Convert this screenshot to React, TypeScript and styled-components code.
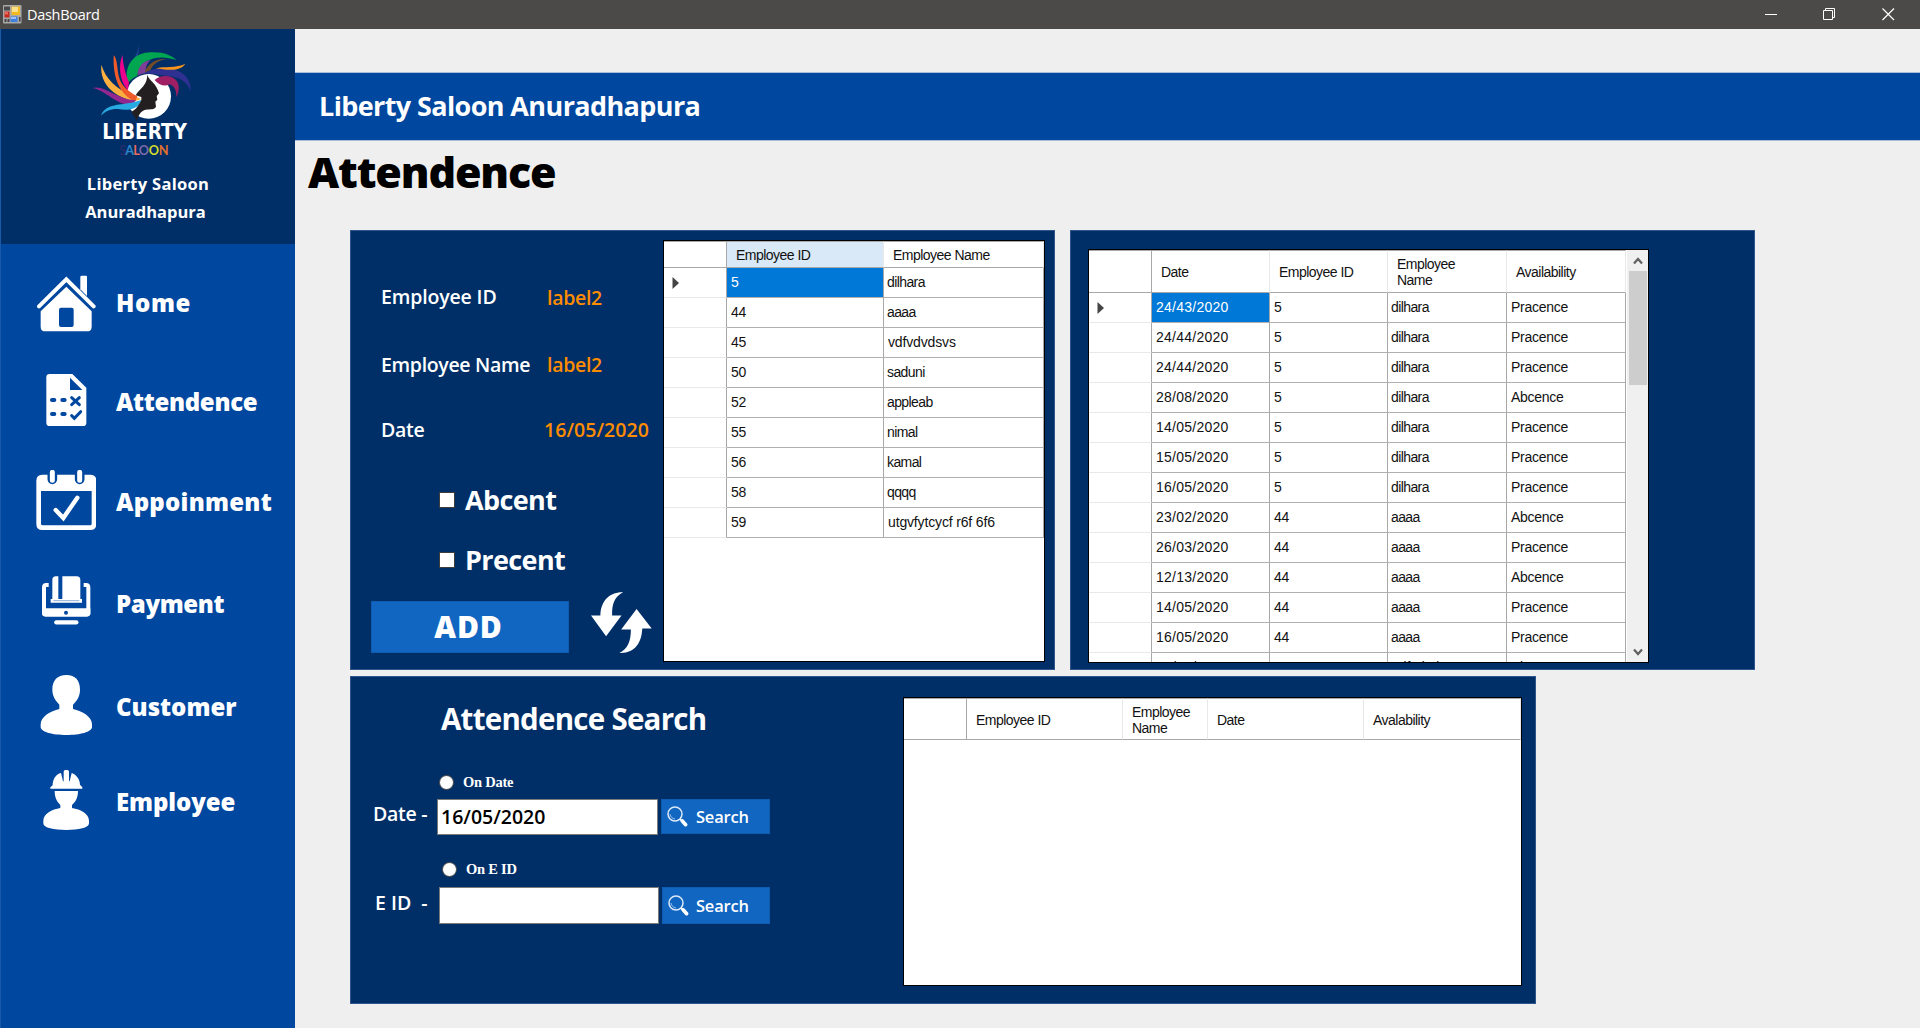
import React from "react";
import styled, { createGlobalStyle } from "styled-components";

const SANS = `"Open Sans", "Noto Sans", sans-serif`;
const GRID = `"Liberation Sans", Arial, sans-serif`;
const NAVY = "#002f68";
const BLUE = "#0047a0";
const ACTION = "#1166c1";

const GlobalStyle = createGlobalStyle`
  * { box-sizing: border-box; }
  body { margin: 0; background: #efefef; font-family: ${SANS}; overflow: hidden; }
  button { border: 0; padding: 0; font: inherit; color: inherit; }
`;

const Window = styled.div`
  display: flex;
  flex-direction: column;
  width: 1920px;
  height: 1028px;
  overflow: hidden;
`;

const TitleBar = styled.header`
  display: flex;
  align-items: center;
  height: 29px;
  flex: none;
  padding-left: 3px;
  padding-right: 25px;
  background: #4c4a48;
  color: #fff;
`;

const WindowTitle = styled.span`
  margin-left: 5px;
  flex: 1;
  font-size: 14.5px;
  line-height: 20px;
  letter-spacing: -0.3px;
`;

const WindowControls = styled.div`
  display: flex;
  gap: 46px;
  margin-top: -1px;
`;

const Body = styled.div`
  display: flex;
  flex: 1;
  min-height: 0;
`;

const Sidebar = styled.aside`
  width: 295px;
  flex: none;
  background: ${BLUE};
  border-left: 1px solid #1a58a8;
`;

const Brand = styled.div`
  display: flex;
  flex-direction: column;
  align-items: center;
  height: 215px;
  padding-top: 14px;
  background: ${NAVY};
`;

const BrandName = styled.div<{ $shift: number; $track: number; $gap: number }>`
  height: 24px;
  margin-top: ${(p) => p.$gap}px;
  margin-left: ${(p) => p.$shift}px;
  font-size: 16.5px;
  font-weight: 700;
  line-height: 24px;
  letter-spacing: ${(p) => p.$track}px;
  white-space: nowrap;
  color: #fff;
`;

const NavItem = styled.a<{ $gap: number }>`
  display: flex;
  align-items: center;
  height: 60px;
  margin-top: ${(p) => p.$gap}px;
  padding-left: 35px;
  color: #fff;
`;

const NavText = styled.span<{ $track: number; $drop: number }>`
  margin: ${(p) => p.$drop}px 0 0 20px;
  font-size: 24px;
  font-weight: 800;
  line-height: 32px;
  letter-spacing: ${(p) => p.$track}px;
`;

const Main = styled.main`
  flex: 1;
  min-width: 0;
  padding-top: 43px;
`;

const Banner = styled.div`
  height: 69px;
  padding: 14px 0 0 24px;
  background: ${BLUE};
  border-top: 1px solid #a9bcd9;
  border-bottom: 1px solid #a9bcd9;
  color: #fff;
  font-size: 27px;
  font-weight: 700;
  line-height: 38px;
  letter-spacing: -0.61px;
`;

const PageTitle = styled.h1`
  margin: 0;
  height: 89px;
  padding: 2px 0 0 13px;
  font-size: 43px;
  font-weight: 800;
  line-height: 58px;
  letter-spacing: -1.15px;
  color: #000;
`;

const PanelRow = styled.div`
  display: flex;
  gap: 15px;
  padding-left: 55px;
  margin-bottom: 6px;
`;

const Panel = styled.section<{ $w: number; $h: number }>`
  display: flex;
  align-items: flex-start;
  width: ${(p) => p.$w}px;
  height: ${(p) => p.$h}px;
  background: ${NAVY};
  border: 1px solid #2e568a;
`;

const EntryForm = styled.div`
  width: 312px;
  flex: none;
  padding-top: 51px;
  color: #fff;
`;

const Field = styled.div<{ $gap: number }>`
  display: flex;
  height: 30px;
  margin-top: ${(p) => p.$gap}px;
  padding-left: 30px;
  font-size: 19.5px;
  font-weight: 600;
  line-height: 30px;
`;

const FieldLabel = styled.span<{ $w: number; $track?: number; $drop?: number }>`
  width: ${(p) => p.$w}px;
  flex: none;
  padding-top: ${(p) => p.$drop ?? 0}px;
  letter-spacing: ${(p) => p.$track ?? -0.28}px;
  white-space: pre;
`;

const FieldValue = styled.span<{ $drop?: number; $track?: number }>`
  color: #ff8c00;
  padding-top: ${(p) => p.$drop ?? 0}px;
  letter-spacing: ${(p) => p.$track ?? -0.3}px;
`;

const CheckRow = styled.label<{ $gap: number }>`
  display: flex;
  align-items: center;
  gap: 11px;
  height: 36px;
  margin-top: ${(p) => p.$gap}px;
  padding-left: 88px;
  font-size: 27px;
  font-weight: 700;
  line-height: 36px;
  letter-spacing: -0.62px;
`;

const CheckBox = styled.span`
  width: 16px;
  height: 16px;
  margin-top: -1px;
  margin-right: -1px;
  background: #fff;
  border: 1px solid #3d3d3d;
`;

const Actions = styled.div`
  display: flex;
  align-items: flex-end;
  gap: 22px;
  height: 61px;
  margin-top: 14px;
  padding-left: 20px;
`;

const AddButton = styled.button`
  width: 198px;
  height: 52px;
  background: ${ACTION};
  border: 1px solid #0d5cb2;
  font-size: 30px;
  font-weight: 800;
  line-height: 50px;
  letter-spacing: 0.9px;
  padding: 0 3px 0 0;
`;

const DataGrid = styled.div<{ $w: number; $h: number; $x: number; $y: number }>`
  display: flex;
  width: ${(p) => p.$w}px;
  height: ${(p) => p.$h}px;
  margin: ${(p) => p.$y}px 0 0 ${(p) => p.$x}px;
  flex: none;
  overflow: hidden;
  background: #fff;
  border: 1px solid #000;
  color: #111;
  font-family: ${GRID};
  font-size: 14px;
`;

const GridRows = styled.div`
  flex: 1;
  min-width: 0;
`;

const Line = styled.div<{ $cols: string; $h: number }>`
  display: grid;
  grid-template-columns: ${(p) => p.$cols};
  height: ${(p) => p.$h}px;
`;

const HeadCell = styled.div<{ $active?: boolean; $edge?: boolean }>`
  display: flex;
  align-items: center;
  padding: 1px 0 0 9px;
  line-height: 16px;
  letter-spacing: -0.52px;
  background: ${(p) => (p.$active ? "#d9e9f7" : "#fff")};
  border-top: 1px solid #a8a8a8;
  border-right: 1px solid ${(p) => (p.$edge ? "#a8a8a8" : "#e8e8e8")};
  border-bottom: 1px solid #a8a8a8;
`;

const RowHead = styled.div`
  display: flex;
  align-items: center;
  padding-left: 8px;
  border-right: 1px solid #a8a8a8;
  border-bottom: 1px solid #e9e9e9;
`;

const Cell = styled.div<{ $selected?: boolean; $track: number }>`
  padding-left: ${(p) => (p.$track === -0.6 ? 3 : 4)}px;
  line-height: 29px;
  letter-spacing: ${(p) => p.$track}px;
  white-space: nowrap;
  color: ${(p) => (p.$selected ? "#fff" : "#111")};
  background: ${(p) => (p.$selected ? "#0078d7" : "#fff")};
  border-right: 1px solid #a8a8a8;
  border-bottom: 1px solid #b0b0b0;
`;

const ScrollTrack = styled.div`
  display: flex;
  flex-direction: column;
  align-items: center;
  width: 21px;
  background: #f0f0f0;
`;

const ScrollArrow = styled.div`
  display: flex;
  align-items: center;
  justify-content: center;
  height: 21px;
  flex: none;
`;

const ScrollThumb = styled.div`
  width: 18px;
  height: 114px;
  background: #cdcdcd;
`;

const ScrollSpace = styled.div`
  flex: 1;
`;

const SearchForm = styled.div`
  width: 552px;
  flex: none;
  padding-top: 22px;
  color: #fff;
`;

const SearchTitle = styled.h2`
  margin: 0;
  height: 40px;
  padding-left: 90px;
  font-size: 29.5px;
  font-weight: 700;
  line-height: 39px;
  letter-spacing: -0.74px;
`;

const RadioRow = styled.label<{ $gap: number; $x: number }>`
  display: flex;
  align-items: center;
  gap: 9px;
  height: 20px;
  margin-top: ${(p) => p.$gap}px;
  padding-left: ${(p) => p.$x}px;
  font-family: "Liberation Serif", "Times New Roman", serif;
  font-size: 14.5px;
  font-weight: 700;
  line-height: 20px;
  letter-spacing: -0.25px;
`;

const Radio = styled.span`
  width: 15px;
  height: 15px;
  border-radius: 50%;
  background: #fff;
  border: 1px solid #444;
`;

const SearchRow = styled.div<{ $gap: number; $x: number }>`
  display: flex;
  margin-top: ${(p) => p.$gap}px;
  padding-left: ${(p) => p.$x}px;
  font-size: 19.5px;
  font-weight: 600;
  line-height: 30px;
`;

const TextBox = styled.div<{ $w: number; $h: number }>`
  width: ${(p) => p.$w}px;
  height: ${(p) => p.$h}px;
  padding: 2px 0 0 3px;
  background: #fff;
  border: 1px solid #7a7a7a;
  color: #000;
`;

const SearchButton = styled.button<{ $w: number; $h: number; $gap: number }>`
  display: flex;
  align-items: center;
  gap: ${(p) => p.$gap}px;
  width: ${(p) => p.$w}px;
  height: ${(p) => p.$h}px;
  margin-left: 3px;
  padding-left: 5px;
  background: ${ACTION};
  border: 1px solid #0d5cb2;
  font-size: 16.5px;
  font-weight: 600;
  line-height: 24px;
  letter-spacing: -0.2px;
`;

const FormIcon = () => (
  <svg width="19" height="19" viewBox="0 0 19 19">
    <rect width="18.5" height="18.5" rx="1" fill="#a9a9a9" />
    <rect x="1" y="1.500" width="6" height="4" fill="#4a4a4a" />
    <rect x="1.500" y="6.500" width="5" height="6" fill="#c5281c" />
    <rect x="2" y="7" width="3" height="2.500" fill="#e9695c" />
    <rect x="8.500" y="1.500" width="8.500" height="8.500" fill="#f3b820" />
    <rect x="9" y="2" width="6" height="5" fill="#fbe28a" />
    <rect x="7.500" y="11.500" width="7" height="5.500" fill="#3f7fe0" />
    <rect x="8" y="12" width="5" height="2" fill="#9cc0f8" />
    <path d="M1.500 14h2v3h-2zM4.500 14h2v3h-2zM16 12h1.500v4.500H16z" fill="#444" />
  </svg>
);

const LogoArt = styled.svg`
  flex: none;
  margin-right: 12px;
`;

const Logo = () => (
  <LogoArt width="104" height="116" viewBox="270 130 312 348">
    <circle cx="446" cy="290" r="67" fill="#fff" />
    <path d="M393 207C393 180 416 166 415 134C421 165 407 190 393 207Z" fill="#1d3f93" />
    <path d="M383 252C370 200 400 158 452 158C490 156 514 167 530 181C492 168 456 172 436 187C417 201 414 215 412 229C400 233 391 241 383 252Z" fill="#00a650" />
    <path d="M413 228C412 203 427 185 452 181C439 192 436 206 437 221C428 222 420 224 413 228Z" fill="#7f3f98" />
    <path d="M434 219C440 194 466 176 499 178C475 183 460 192 451 212Z" fill="#754c29" />
    <path d="M430 222C458 204 495 205 521 210C556 217 573 243 572 274C561 246 540 232 502 229C474 226 450 221 430 222Z" fill="#2e3192" />
    <path d="M467 206C490 199 530 206 556 192C542 216 500 212 467 206Z" fill="#f7941e" />
    <path d="M464 241C480 225 512 225 528 241C541 256 537 276 529 293C530 272 523 259 509 254C495 262 475 256 464 241Z" fill="#9e1f63" />
    <path d="M368 165C367 190 379 230 387 248L384 271C362 250 352 200 368 165Z" fill="#ec008c" />
    <path d="M304 195C318 240 350 268 395 286L424 298L404 305C350 294 298 258 304 195Z" fill="#fbb040" />
    <path d="M341 167C356 180 348 225 366 252C378 270 398 282 412 290L406 305C360 286 338 238 341 167Z" fill="#f15a29" />
    <path d="M277 265C312 254 346 297 408 302L396 315C346 318 322 273 277 265Z" fill="#92278f" />
    <path d="M303 348C318 307 368 320 424 301C416 330 384 334 354 328C332 327 315 335 303 348Z" fill="#27aae1" />
    <path d="M442 225C449 246 470 250 477 281L470 289L472 300L466 306L468 321C462 333 445 326 432 332C417 339 417 350 409 363C405 352 400 344 393 337C405 331 414 322 424 301V292L407 287C418 266 440 262 442 225Z" fill="#231f20" />
    <text x="307" y="418" fill="#fff" fontFamily="DejaVu Sans Condensed, DejaVu Sans, sans-serif" fontSize="64" fontWeight="700" textLength="254" lengthAdjust="spacingAndGlyphs">LIBERTY</text>
    <text y="465" fontFamily="Lato, sans-serif" fontSize="38" fontWeight="700">
      <tspan x="358" fill="#262b6b">S</tspan>
      <tspan x="376" fill="#2f86c9">A</tspan>
      <tspan x="400" fill="#ee6a5b">L</tspan>
      <tspan x="416" fill="#7d69a8">O</tspan>
      <tspan x="446" fill="#d2dc2a">O</tspan>
      <tspan x="476" fill="#e0702c">N</tspan>
    </text>
  </LogoArt>
);

const HomeIcon = () => (
  <svg width="60" height="60" viewBox="108 69 180 180">
    <g fill="#fff">
      <path d="M241 118V81Q241 77 245 77H257Q261 77 261 81V138Z" />
      <path d="M199 110L275 184V230Q275 244 261 244H136Q122 244 122 230V184ZM183 173Q177 173 177 179V225Q177 231 183 231H215Q221 231 221 225V179Q221 173 215 173Z" fillRule="evenodd" />
    </g>
    <path d="M117 169L199 88L281 169" fill="none" stroke="#fff" strokeWidth="12" strokeLinecap="round" strokeLinejoin="miter" />
  </svg>
);

const SheetIcon = () => (
  <svg width="60" height="60" viewBox="108 360 180 180">
    <path d="M149 372H217L259 413V518Q259 528 249 528H149Q139 528 139 518V382Q139 372 149 372Z" fill="#fff" />
    <path d="M210 383V420H247Z" fill={BLUE} />
    <g stroke={BLUE} strokeLinecap="round" fill="none">
      <path d="M156 450H163M187 450H194M156 492H163M187 492H194" strokeWidth="12" />
      <path d="M215 443L238 464M238 443L215 464" strokeWidth="9" />
      <path d="M215 497L223 505L242 485" strokeWidth="9" />
    </g>
  </svg>
);

const CalendarIcon = () => (
  <svg width="60" height="60" viewBox="108 660 180 180">
    <path d="M127 674H271Q289 674 289 692V822Q289 840 271 840H127Q109 840 109 822V692Q109 674 127 674ZM123 723V821Q123 826 128 826H270Q275 826 275 821V723Z" fill="#fff" fillRule="evenodd" />
    <path d="M157 672V688M239 672V688" stroke={BLUE} strokeWidth="29" strokeLinecap="round" />
    <path d="M157 667V691M239 667V691" stroke="#fff" strokeWidth="15" strokeLinecap="round" />
    <path d="M167 780L190 804L232 743" fill="none" stroke="#fff" strokeWidth="13" strokeLinecap="round" />
  </svg>
);

const PaymentIcon = () => (
  <svg width="60" height="60" viewBox="108 60 180 180">
    <path d="M146 105H139Q132 105 132 112V187H265V112Q265 105 258 105H251" fill="none" stroke="#fff" strokeWidth="12" />
    <path d="M126 175H271V190Q271 200 261 200H136Q126 200 126 190Z" fill="#fff" />
    <path d="M168 79H175V148H157V90Q157 79 168 79ZM187 79H230Q241 79 241 90V148H187ZM152 147H246V158H152Z" fill="#fff" />
    <path d="M160 152H238" stroke="#8fb0d8" strokeWidth="3" />
    <circle cx="198" cy="188" r="6" fill={BLUE} />
    <path d="M169 217H229" stroke="#fff" strokeWidth="13" strokeLinecap="round" />
  </svg>
);

const CustomerIcon = () => (
  <svg width="60" height="60" viewBox="108 375 180 180">
    <path d="M199 375C226 375 240 391 240 419C240 440 230 453 219 464V477C247 483 276 500 276 523V531C276 546 240 555 199 555C158 555 122 546 122 531V523C122 500 151 483 178 477V464C168 453 157 440 157 419C157 391 172 375 199 375Z" fill="#fff" />
  </svg>
);

const EmployeeIcon = () => (
  <svg width="60" height="60" viewBox="108 660 180 180">
    <g fill="#fff">
      <path d="M158 706C158 688 168 672 183 669L189 694H191V665Q191 660 196 660H202Q207 660 207 665V694H209L215 669C230 674 240 690 240 704L247 712V716H151V712Z" />
      <path d="M164 723H234C234 745 226 756 216 765V774C242 778 267 792 267 812V820C267 834 235 840 199 840C162 840 130 834 130 820V812C130 792 156 778 181 774V765C172 756 164 745 164 723Z" />
    </g>
  </svg>
);

const RefreshIcon = () => (
  <svg width="61" height="61" viewBox="753 1116 182 182">
    <path d="M849 1117C824 1130 815 1150 816 1186H844L798 1248L753 1186H781C782 1146 805 1116 849 1117Z" fill="#fff" />
    <path d="M838 1298C862 1286 872 1264 872 1228H843L889 1167L934 1225H906C904 1268 884 1299 838 1298Z" fill="#fff" />
  </svg>
);

const SearchIcon = () => (
  <svg width="22" height="22" viewBox="980 406 66 66" fill="none" stroke="#fff">
    <circle cx="1004" cy="430" r="21" strokeWidth="4.500" stroke="#dce9f8" />
    <path d="M989 430C990 438 996 444 1004 445" strokeWidth="3" stroke="#9cc3ee" />
    <path d="M1019 445L1026 452" strokeWidth="6" />
    <path d="M1026 451L1036 462" strokeWidth="11" strokeLinecap="round" />
  </svg>
);

const Minimize = () => (
  <svg width="13" height="13" viewBox="0 0 13 13"><path d="M1 6.500H13" stroke="#fff" /></svg>
);
const Restore = () => (
  <svg width="13" height="13" viewBox="0 0 13 13" fill="none" stroke="#fff"><path d="M.5 2.500H9.500V11.500H.5ZM2.500 2.500V.5H11.500V9.500H9.500" /></svg>
);
const Close = () => (
  <svg width="13" height="13" viewBox="0 0 13 13"><path d="M.5 .5L12 12M12 .5L.5 12" stroke="#fff" strokeWidth="1.200" /></svg>
);

const RowMarker = () => (
  <svg width="8" height="12" viewBox="0 0 8 12"><path d="M.5 0L7 6L.5 12Z" fill="#444" /></svg>
);

const Chevron = ({ down }: { down?: boolean }) => (
  <svg width="10" height="8" viewBox="0 0 10 8">
    <path d={down ? "M1 1.500L5 6L9 1.500" : "M1 6.500L5 2L9 6.500"} fill="none" stroke="#606060" strokeWidth="2.200" />
  </svg>
);

const nav = [
  { text: "Home", icon: <HomeIcon />, gap: 29, track: 0.6, drop: 0 },
  { text: "Attendence", icon: <SheetIcon />, gap: 37, track: -0.33, drop: 3 },
  { text: "Appoinment", icon: <CalendarIcon />, gap: 40, track: 0.25, drop: 3 },
  { text: "Payment", icon: <PaymentIcon />, gap: 40, track: -0.36, drop: 8 },
  { text: "Customer", icon: <CustomerIcon />, gap: 45, track: 0, drop: 3 },
  { text: "Employee", icon: <EmployeeIcon />, gap: 35, track: -0.08, drop: 3 },
];

const employees: [string, string][] = [
  ["5", "dilhara"],
  ["44", "aaaa"],
  ["45", "vdfvdvdsvs"],
  ["50", "saduni"],
  ["52", "appleab"],
  ["55", "nimal"],
  ["56", "kamal"],
  ["58", "qqqq"],
  ["59", "utgvfytcycf r6f 6f6"],
];

const attendance: [string, string, string, string][] = [
  ["24/43/2020", "5", "dilhara", "Pracence"],
  ["24/44/2020", "5", "dilhara", "Pracence"],
  ["24/44/2020", "5", "dilhara", "Pracence"],
  ["28/08/2020", "5", "dilhara", "Abcence"],
  ["14/05/2020", "5", "dilhara", "Pracence"],
  ["15/05/2020", "5", "dilhara", "Pracence"],
  ["16/05/2020", "5", "dilhara", "Pracence"],
  ["23/02/2020", "44", "aaaa", "Abcence"],
  ["26/03/2020", "44", "aaaa", "Pracence"],
  ["12/13/2020", "44", "aaaa", "Abcence"],
  ["14/05/2020", "44", "aaaa", "Pracence"],
  ["16/05/2020", "44", "aaaa", "Pracence"],
  ["20/02/2020", "45", "vdfvdvdsvs", "Abcence"],
];

/* Dates run slightly open, names slightly tight. */
const tracking = (s: string) => {
  if (s.includes("/")) return 0.25;
  if (/^\d+$/.test(s)) return -0.3;
  if (/^[A-Z]/.test(s)) return -0.27;
  if (/[vf]/.test(s)) return -0.15;
  return -0.6;
};

const GridLines = ({ cols, rows }: { cols: string; rows: string[][] }) => (
  <>
    {rows.map((row, r) => (
      <Line key={r} $cols={cols} $h={30}>
        <RowHead>{r === 0 && <RowMarker />}</RowHead>
        {row.map((value, c) => (
          <Cell key={c} $selected={r === 0 && c === 0} $track={tracking(value)}>
            {value}
          </Cell>
        ))}
      </Line>
    ))}
  </>
);

export default function App() {
  return (
    <Window>
      <GlobalStyle />
      <TitleBar>
        <FormIcon />
        <WindowTitle>DashBoard</WindowTitle>
        <WindowControls>
          <Minimize />
          <Restore />
          <Close />
        </WindowControls>
      </TitleBar>
      <Body>
        <Sidebar>
          <Brand>
            <Logo />
            <BrandName $gap={13} $shift={0} $track={0.3}>Liberty Saloon</BrandName>
            <BrandName $gap={4} $shift={-5} $track={0}>Anuradhapura</BrandName>
          </Brand>
          {nav.map((n) => (
            <NavItem key={n.text} $gap={n.gap}>
              {n.icon}
              <NavText $track={n.track} $drop={n.drop}>{n.text}</NavText>
            </NavItem>
          ))}
        </Sidebar>
        <Main>
          <Banner>Liberty Saloon Anuradhapura</Banner>
          <PageTitle>Attendence</PageTitle>
          <PanelRow>
            <Panel $w={705} $h={440}>
              <EntryForm>
                <Field $gap={0}>
                  <FieldLabel $w={166} $track={-0.15}>Employee ID</FieldLabel>
                  <FieldValue $drop={1}>label2</FieldValue>
                </Field>
                <Field $gap={38}>
                  <FieldLabel $w={166} $track={-0.33}>Employee Name</FieldLabel>
                  <FieldValue>label2</FieldValue>
                </Field>
                <Field $gap={35}>
                  <FieldLabel $w={163}>Date</FieldLabel>
                  <FieldValue $track={0.05}>16/05/2020</FieldValue>
                </Field>
                <CheckRow $gap={37}>
                  <CheckBox />
                  Abcent
                </CheckRow>
                <CheckRow $gap={24}>
                  <CheckBox />
                  Precent
                </CheckRow>
                <Actions>
                  <AddButton>ADD</AddButton>
                  <RefreshIcon />
                </Actions>
              </EntryForm>
              <DataGrid $w={382} $h={422} $x={0} $y={9}>
                <GridRows>
                  <Line $cols="63px 157px 160px" $h={27}>
                    <HeadCell $edge />
                    <HeadCell $active>Employee ID</HeadCell>
                    <HeadCell>Employee Name</HeadCell>
                  </Line>
                  <GridLines cols="63px 157px 160px" rows={employees} />
                </GridRows>
              </DataGrid>
            </Panel>
            <Panel $w={685} $h={440}>
              <DataGrid $w={561} $h={414} $x={17} $y={18}>
                <GridRows>
                  <Line $cols="63px 118px 118px 119px 119px" $h={43}>
                    <HeadCell $edge />
                    <HeadCell>Date</HeadCell>
                    <HeadCell>Employee ID</HeadCell>
                    <HeadCell>Employee<br />Name</HeadCell>
                    <HeadCell>Availability</HeadCell>
                  </Line>
                  <GridLines cols="63px 118px 118px 119px 119px" rows={attendance} />
                </GridRows>
                <ScrollTrack>
                  <ScrollArrow><Chevron /></ScrollArrow>
                  <ScrollThumb />
                  <ScrollSpace />
                  <ScrollArrow><Chevron down /></ScrollArrow>
                </ScrollTrack>
              </DataGrid>
            </Panel>
          </PanelRow>
          <PanelRow>
            <Panel $w={1186} $h={328}>
              <SearchForm>
                <SearchTitle>Attendence Search</SearchTitle>
                <RadioRow $gap={33} $x={88}>
                  <Radio />
                  On Date
                </RadioRow>
                <SearchRow $gap={7} $x={22}>
                  <FieldLabel $w={64}>Date -</FieldLabel>
                  <TextBox $w={221} $h={36}>16/05/2020</TextBox>
                  <SearchButton $w={109} $h={35} $gap={7}><SearchIcon />Search</SearchButton>
                </SearchRow>
                <RadioRow $gap={24} $x={91}>
                  <Radio />
                  On E ID
                </RadioRow>
                <SearchRow $gap={8} $x={24}>
                  <FieldLabel $w={64} $track={0} $drop={1}>E ID  -</FieldLabel>
                  <TextBox $w={220} $h={37} />
                  <SearchButton $w={108} $h={37} $gap={6}><SearchIcon />Search</SearchButton>
                </SearchRow>
              </SearchForm>
              <DataGrid $w={619} $h={289} $x={0} $y={20}>
                <GridRows>
                  <Line $cols="63px 156px 85px 156px 157px" $h={42}>
                    <HeadCell $edge />
                    <HeadCell>Employee ID</HeadCell>
                    <HeadCell>Employee<br />Name</HeadCell>
                    <HeadCell>Date</HeadCell>
                    <HeadCell>Avalability</HeadCell>
                  </Line>
                </GridRows>
              </DataGrid>
            </Panel>
          </PanelRow>
        </Main>
      </Body>
    </Window>
  );
}
